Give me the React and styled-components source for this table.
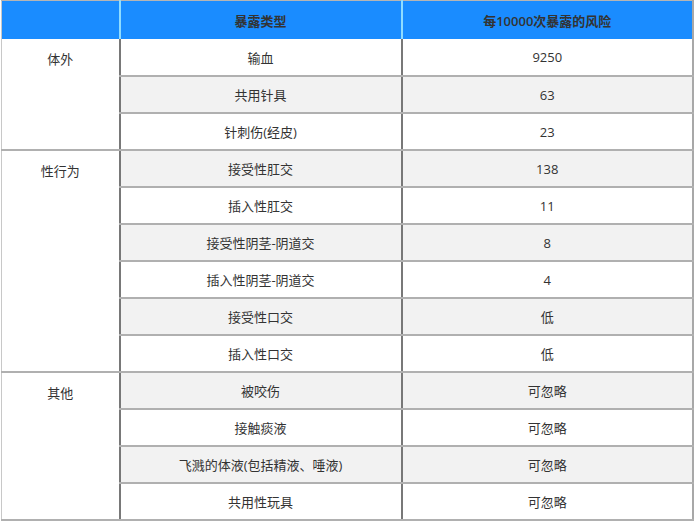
import React from 'react';
import styled, { createGlobalStyle } from 'styled-components';

const GlobalStyle = createGlobalStyle`
  html, body {
    margin: 0;
    padding: 0;
    background: #fff;
  }
  body {
    font-family: "Open Sans", "Noto Sans CJK SC", sans-serif;
  }
`;

const rows = [
  { group: '体外', span: 3, type: '输血', risk: '9250' },
  { type: '共用针具', risk: '63' },
  { type: '针刺伤(经皮)', risk: '23' },
  { group: '性行为', span: 6, type: '接受性肛交', risk: '138' },
  { type: '插入性肛交', risk: '11' },
  { type: '接受性阴茎-阴道交', risk: '8' },
  { type: '插入性阴茎-阴道交', risk: '4' },
  { type: '接受性口交', risk: '低' },
  { type: '插入性口交', risk: '低' },
  { group: '其他', span: 4, type: '被咬伤', risk: '可忽略' },
  { type: '接触痰液', risk: '可忽略' },
  { type: '飞溅的体液(包括精液、唾液)', risk: '可忽略' },
  { type: '共用性玩具', risk: '可忽略' },
];

function App() {
  return (
    <>
      <GlobalStyle />
      <Wrapper>
        <Table>
          <colgroup>
            <col style={{ width: 118 }} />
            <col style={{ width: 282 }} />
            <col />
          </colgroup>
          <thead>
            <tr>
              <Th />
              <Th>暴露类型</Th>
              <Th>每10000次暴露的风险</Th>
            </tr>
          </thead>
          <tbody>
            {rows.map((r, i) => (
              <Row key={r.type} striped={i % 2 === 1}>
                {r.group && <GroupCell rowSpan={r.span}>{r.group}</GroupCell>}
                <Cell>{r.type}</Cell>
                <Cell>{r.risk}</Cell>
              </Row>
            ))}
          </tbody>
        </Table>
      </Wrapper>
    </>
  );
}

export default App;

const Wrapper = styled.div`
  padding: 0 1px 0 1px;
  width: 693px;
`;

const Table = styled.table`
  width: 693px;
  border-collapse: collapse;
  table-layout: fixed;
  font-size: 13px;
  color: #333;
  border-top: 1px solid #b5b5b5;
  border-left: 1px solid #c8c8c8;
  border-right: 2px solid #a8a8a8;
  border-bottom: 2px solid #a8a8a8;
`;

const Th = styled.th`
  height: 38px;
  padding: 0;
  background: #1a8cff;
  color: #333;
  font-weight: 600;
  text-align: center;
  vertical-align: middle;
  border-left: 2px solid #8fdcff;
  &:first-child {
    border-left: none;
  }
`;

const Row = styled.tr`
  background: ${(p) => (p.striped ? '#f2f2f2' : '#fff')};
  height: 37px;
`;

const Cell = styled.td`
  padding: 0;
  text-align: center;
  vertical-align: middle;
  border-bottom: 2px solid #b0b0b0;
  border-left: 2px solid #787878;
`;

const GroupCell = styled.td`
  background: #fff;
  padding: 10px 0 0;
  text-align: center;
  vertical-align: top;
  border-bottom: 2px solid #b0b0b0;
`;
